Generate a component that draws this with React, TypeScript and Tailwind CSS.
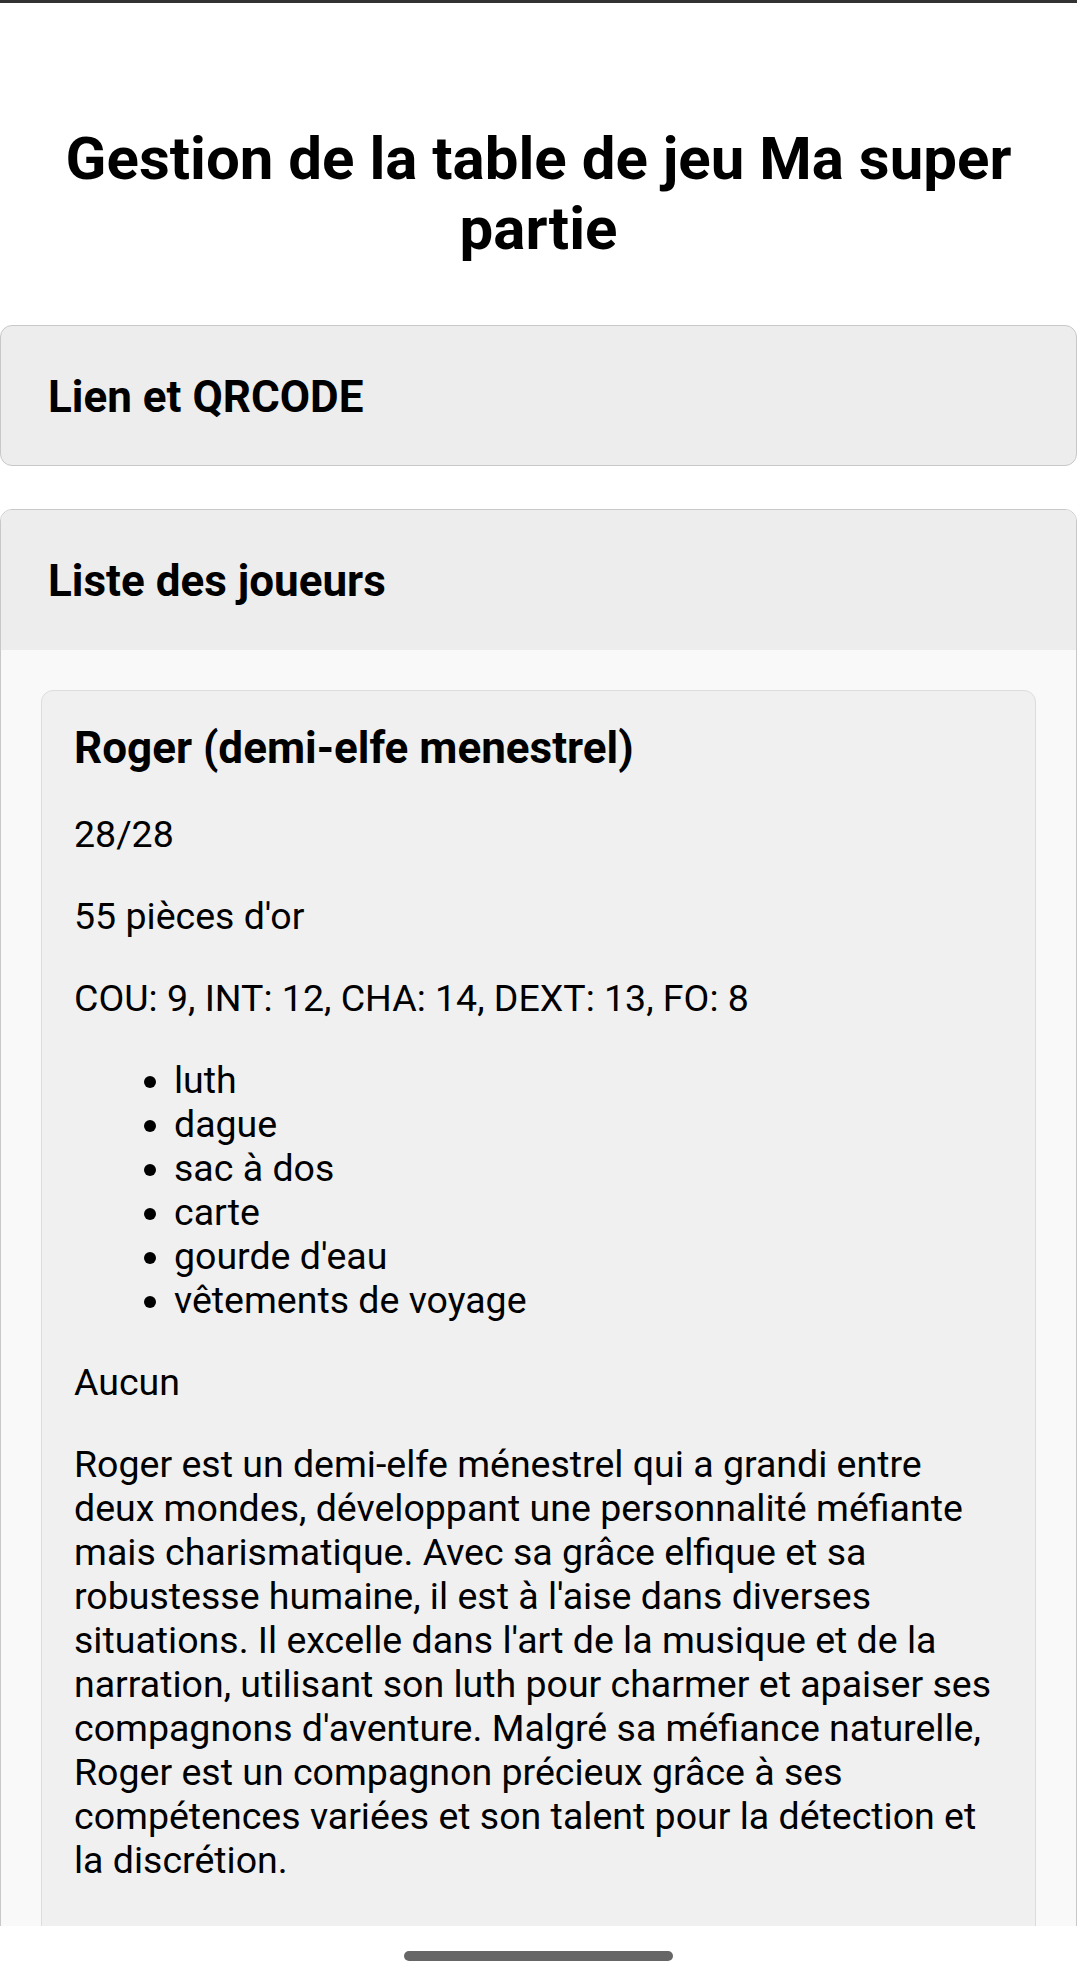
const equipment = ["luth", "dague", "sac à dos", "carte", "gourde d'eau", "vêtements de voyage"]

const description =
  "Roger est un demi-elfe ménestrel qui a grandi entre deux mondes, développant une personnalité méfiante mais charismatique. Avec sa grâce elfique et sa robustesse humaine, il est à l'aise dans diverses situations. Il excelle dans l'art de la musique et de la narration, utilisant son luth pour charmer et apaiser ses compagnons d'aventure. Malgré sa méfiance naturelle, Roger est un compagnon précieux grâce à ses compétences variées et son talent pour la détection et la discrétion."

const PlayerCard = () => {
  return (
    <div className="rounded-[12px] border border-[#dcdcdc] bg-[#f0f0f0] px-[32px] pt-[32px] pb-[70px]">
      <h3 className="text-[44px] font-bold leading-[51.5px]">Roger (demi-elfe menestrel)</h3>
      <div className="mt-[37.5px] flex flex-col gap-[38px] text-[37.5px] leading-[44px]">
        <p>28/28</p>
        <p>55 pièces d'or</p>
        <p>COU: 9, INT: 12, CHA: 14, DEXT: 13, FO: 8</p>
        <ul className="list-disc pl-[100px]">
          {equipment.map((item) => (
            <li key={item}>{item}</li>
          ))}
        </ul>
        <p>Aucun</p>
        <p>{description}</p>
      </div>
    </div>
  )
}

export default function App() {
  return (
    <div className="flex h-[1986px] flex-col overflow-hidden bg-white font-['Roboto',sans-serif] text-black">
      <div className="h-[3px] shrink-0 bg-[#333333]" />
      <main className="flex-1 overflow-hidden pt-[121px]">
        <h1 className="px-[40px] text-center text-[60px] font-bold leading-[70.3px]">
          Gestion de la table de jeu Ma super partie
        </h1>

        <section className="mt-[60px] rounded-[12px] border border-[#c8c8c8] bg-[#ededed] px-[47px] pt-[46px] pb-[42px]">
          <h3 className="text-[44px] font-bold leading-[51.5px]">Lien et QRCODE</h3>
        </section>

        <section className="mt-[43px] overflow-hidden rounded-[12px] border border-[#c8c8c8]">
          <div className="bg-[#ededed] px-[47px] pt-[46px] pb-[42px]">
            <h3 className="text-[44px] font-bold leading-[51.5px]">Liste des joueurs</h3>
          </div>
          <div className="bg-[#f9f9f9] p-[40px]">
            <PlayerCard />
          </div>
        </section>
      </main>
      <div className="flex h-[60px] shrink-0 items-center justify-center bg-white">
        <div className="h-[10px] w-[269px] rounded-full bg-[#666666]" />
      </div>
    </div>
  )
}
